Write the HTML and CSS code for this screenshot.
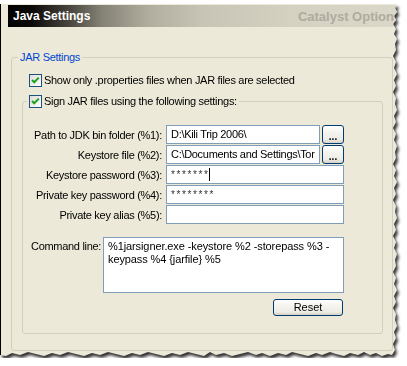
FILE: index.html
```html
<!DOCTYPE html>
<html>
<head>
<meta charset="utf-8">
<link rel="stylesheet" href="styles.css">
</head>
<body>
<div class="wrap">
  <div class="sheet">
    <div class="titlebar">
      <span class="title">Java Settings</span>
      <span class="crumb">Catalyst Option</span>
    </div>
    <fieldset class="group outer">
      <legend class="legend-blue">JAR Settings</legend>
      <label class="check first">
        <span class="cb"><svg width="11" height="11" viewBox="0 0 11 11"><path d="M2 5 L4.2 7.3 L8.8 2.6" fill="none" stroke="#21a121" stroke-width="2"/></svg></span>
        <span>Show only .properties files when JAR files are selected</span>
      </label>
      <fieldset class="group inner">
        <legend class="legend-check">
          <label class="check">
            <span class="cb"><svg width="11" height="11" viewBox="0 0 11 11"><path d="M2 5 L4.2 7.3 L8.8 2.6" fill="none" stroke="#21a121" stroke-width="2"/></svg></span>
            <span>Sign JAR files using the following settings:</span>
          </label>
        </legend>
        <div class="body">
          <div class="form">
            <span class="lbl">Path to JDK bin folder (%1):</span>
            <div class="pair"><div class="field">D:\Kili Trip 2006\</div><button class="btn dots">...</button></div>
            <span class="lbl">Keystore file (%2):</span>
            <div class="pair"><div class="field">C:\Documents and Settings\Tor</div><button class="btn dots">...</button></div>
            <span class="lbl">Keystore password (%3):</span>
            <div class="field pw">*******<span class="caret"></span></div>
            <span class="lbl">Private key password (%4):</span>
            <div class="field pw">********</div>
            <span class="lbl">Private key alias (%5):</span>
            <div class="field"></div>
          </div>
          <div class="cmd">
            <span class="cmd-lbl">Command line:</span>
            <div class="area">%1jarsigner.exe -keystore %2 -storepass %3 -<br>keypass %4 {jarfile} %5</div>
          </div>
          <div class="actions">
            <button class="btn reset">Reset</button>
          </div>
        </div>
      </fieldset>
    </fieldset>
  </div>
</div>
</body>
</html>
```
FILE: styles.css
```css
* { box-sizing: border-box; }
body {
  margin: 0;
  background: #fff;
  font-family: "Liberation Sans", Arial, sans-serif;
  font-size: 11px;
  letter-spacing: -0.3px;
  color: #000;
}
.wrap {
  width: 404px;
  padding-top: 4px;
  filter: drop-shadow(2px 3px 1.5px rgba(0,0,0,0.8));
}
.sheet {
  width: 400px;
  height: 354px;
  background: #ece9d8;
  border-left: 1px solid #000;
  display: flex;
  flex-direction: column;
  clip-path: polygon(0 0, 397px 0, 395px 4px, 397px 8px, 394px 12px, 396px 16px, 393px 20px, 396px 25px, 394px 30px, 397px 35px, 395px 40px, 396px 46px, 393px 52px, 396px 58px, 394px 64px, 397px 70px, 394px 76px, 396px 82px, 393px 88px, 396px 94px, 395px 100px, 397px 106px, 394px 112px, 396px 118px, 393px 124px, 396px 130px, 394px 136px, 397px 142px, 395px 148px, 396px 154px, 393px 160px, 396px 166px, 394px 172px, 397px 178px, 394px 184px, 396px 190px, 393px 196px, 396px 202px, 395px 208px, 397px 214px, 394px 220px, 396px 226px, 393px 232px, 396px 238px, 394px 244px, 397px 250px, 395px 256px, 396px 262px, 393px 268px, 396px 274px, 394px 280px, 397px 286px, 394px 292px, 396px 298px, 393px 304px, 396px 310px, 395px 316px, 397px 322px, 394px 328px, 396px 334px, 393px 340px, 395px 346px, 392px 351px, 388px 350px, 382px 352px, 376px 349px, 370px 351px, 364px 348px, 358px 351px, 350px 349px, 344px 352px, 336px 350px, 330px 348px, 322px 351px, 316px 349px, 308px 352px, 300px 350px, 292px 348px, 286px 351px, 278px 349px, 270px 352px, 262px 349px, 256px 351px, 248px 348px, 240px 350px, 232px 352px, 224px 349px, 216px 351px, 210px 348px, 204px 352px, 196px 350px, 188px 348px, 180px 351px, 172px 349px, 164px 352px, 156px 350px, 148px 348px, 140px 351px, 132px 349px, 124px 352px, 116px 350px, 108px 348px, 100px 351px, 92px 349px, 84px 352px, 76px 350px, 68px 348px, 60px 351px, 52px 349px, 44px 352px, 36px 350px, 28px 348px, 20px 351px, 12px 349px, 6px 352px, 0 351px);
}
.titlebar {
  margin: 1px 0 0 7px;
  height: 22px;
  flex: none;
  display: flex;
  align-items: center;
  justify-content: space-between;
  padding-left: 5px;
  padding-right: 6px;
  white-space: nowrap;
  letter-spacing: 0;
  background: linear-gradient(to right, #000 0%, #0b0a08 6%, #4a4840 16%, #858276 24%, #b2ae9f 36%, #c9c5b6 50%, #d5d1c1 72%, #dcd8c9 100%);
}
.title {
  color: #fff;
  font-weight: bold;
  font-size: 12px;
}
.crumb {
  color: #aeab9f;
  font-weight: bold;
  font-size: 13px;
}
.group {
  border: 1px solid #d0d0bf;
  border-radius: 3px;
  padding: 0;
  min-width: 0;
}
.outer {
  flex: 1;
  margin: 24px 7px 7px 10px;
}
.legend-blue {
  margin-left: 6px;
  padding: 0 2px;
  color: #0046d5;
  line-height: 13px;
}
.check {
  display: flex;
  align-items: center;
  gap: 2px;
  line-height: 13px;
  white-space: nowrap;
}
.check.first {
  margin: 10px 0 0 17px;
}
.cb {
  width: 13px;
  height: 13px;
  flex: none;
  border: 1px solid #1c5180;
  background: linear-gradient(135deg, #dcdcd7, #ffffff);
  display: flex;
}
.cb svg { display: block; }
.inner {
  margin: 8px 9px 0 10px;
  padding-bottom: 17px;
}
.legend-check {
  margin-left: 4px;
  padding: 0 2px;
}
.body {
  width: 321px;
}
.form {
  margin-top: 17px;
  display: grid;
  grid-template-columns: 139px 178px;
  grid-auto-rows: 19px;
  column-gap: 4px;
  row-gap: 1px;
}
.lbl {
  text-align: right;
  align-self: center;
  white-space: nowrap;
}
.pair {
  display: flex;
  gap: 2px;
}
.field {
  flex: 1;
  min-width: 0;
  height: 19px;
  border: 1px solid #7f9db9;
  background: #fff;
  padding: 0 4px;
  line-height: 17px;
  white-space: nowrap;
  overflow: hidden;
  display: flex;
  align-items: center;
}
.field.pw {
  letter-spacing: 1.6px;
  font-size: 10px;
  color: #333;
}
.caret {
  width: 1px;
  height: 13px;
  background: #000;
}
.btn {
  font-family: "Liberation Sans", Arial, sans-serif;
  font-size: 11px;
  color: #000;
  border: 1px solid #003c74;
  border-radius: 3px;
  background: linear-gradient(#ffffff, #f4f3ee 40%, #ecebe5 80%, #d6d0c5);
  padding: 0;
}
.dots {
  width: 22px;
  height: 19px;
  flex: none;
  font-weight: bold;
  font-size: 10px;
  letter-spacing: 0;
  line-height: 12px;
  padding-top: 4px;
}
.cmd {
  margin-top: 13px;
  display: flex;
}
.cmd-lbl {
  width: 80px;
  padding: 3px 0 0 8px;
  flex: none;
  white-space: nowrap;
}
.area {
  width: 241px;
  height: 56px;
  border: 1px solid #7f9db9;
  background: #fff;
  padding: 2px 4px;
  line-height: 13px;
  font-size: 11px;
  letter-spacing: -0.1px;
  white-space: nowrap;
  overflow: hidden;
}
.actions {
  margin-top: 6px;
  display: flex;
  justify-content: flex-end;
  padding-right: 1px;
}
.reset {
  width: 70px;
  height: 17px;
  line-height: 15px;
  letter-spacing: 0;
}
```
